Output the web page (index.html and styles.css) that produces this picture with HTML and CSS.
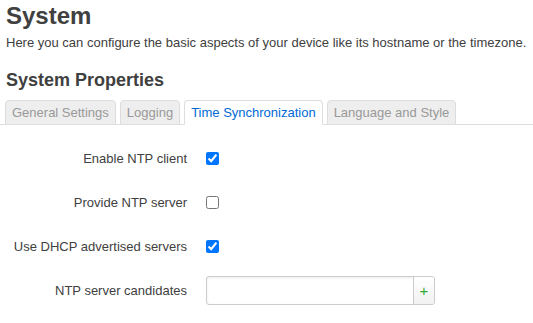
FILE: index.html
```html
<!DOCTYPE html>
<html lang="en">
<head>
    <meta charset="UTF-8">
    <meta name="viewport" content="width=device-width, initial-scale=1.0">
    <title>System</title>
    <link rel="stylesheet" href="styles.css">
</head>
<body>
    <div class="main">
        <h2 class="page-title">System</h2>
        <div class="page-desc">Here you can configure the basic aspects of your device like its hostname or the timezone.</div>

        <h3 class="section-title">System Properties</h3>

        <ul class="tabmenu">
            <li class="tab"><a href="#">General Settings</a></li>
            <li class="tab"><a href="#">Logging</a></li>
            <li class="tab active"><a href="#">Time Synchronization</a></li>
            <li class="tab"><a href="#">Language and Style</a></li>
        </ul>

        <div class="section">
            <div class="row">
                <label class="row-label" for="ntp-client">Enable NTP client</label>
                <div class="row-field"><input type="checkbox" id="ntp-client" checked></div>
            </div>
            <div class="row">
                <label class="row-label" for="ntp-server">Provide NTP server</label>
                <div class="row-field"><input type="checkbox" id="ntp-server"></div>
            </div>
            <div class="row">
                <label class="row-label" for="ntp-dhcp">Use DHCP advertised servers</label>
                <div class="row-field"><input type="checkbox" id="ntp-dhcp" checked></div>
            </div>
            <div class="row">
                <label class="row-label" for="ntp-list">NTP server candidates</label>
                <div class="row-field">
                    <div class="dynlist">
                        <input type="text" id="ntp-list" class="dynlist-input">
                        <button class="dynlist-add">+</button>
                    </div>
                </div>
            </div>
        </div>
    </div>
</body>
</html>
```

FILE: styles.css
```css
body {
    margin: 0;
    padding: 0;
    font-family: "Liberation Sans", Arial, sans-serif;
    font-size: 13px;
    color: #404040;
    background: #fff;
}

.main {
    padding: 2px 0 0 6px;
}

.page-title {
    margin: 0;
    font-size: 24px;
    line-height: 28px;
    font-weight: bold;
}

.page-desc {
    margin-top: 4px;
    line-height: 18px;
}

.section-title {
    margin: 16px 0 0;
    font-size: 18px;
    line-height: 24px;
    font-weight: bold;
}

.tabmenu {
    list-style: none;
    margin: 8px 0 0 -6px;
    padding: 0 0 0 5px;
    display: flex;
    gap: 4px;
    border-bottom: 1px solid #ddd;
}

.tab {
    margin-bottom: -1px;
}

.tab a {
    display: block;
    padding: 0 6px;
    line-height: 23px;
    color: #999;
    text-decoration: none;
    background: #eee;
    border: 1px solid #ddd;
    border-bottom-color: #ddd;
    border-radius: 4px 4px 0 0;
}

.tab.active a {
    color: #0069d6;
    background: #fff;
    border-bottom-color: #fff;
}

.section {
    padding-top: 11px;
}

.row {
    display: flex;
    align-items: center;
    height: 44px;
}

.row-label {
    width: 181px;
    text-align: right;
    flex-shrink: 0;
}

.row-field {
    margin-left: 19px;
    display: flex;
    align-items: center;
}

.row-field input[type="checkbox"] {
    margin: 0;
    width: 13px;
    height: 13px;
}

.dynlist {
    display: flex;
    width: 229px;
    height: 29px;
    box-sizing: border-box;
    border: 1px solid #ccc;
    border-radius: 3px;
    box-shadow: inset 0 1px 3px rgba(0,0,0,0.08);
    overflow: hidden;
}

.dynlist-input {
    flex: 1;
    min-width: 0;
    border: none;
    background: transparent;
    padding: 0 6px;
    outline: none;
    font: inherit;
}

.dynlist-add {
    width: 21px;
    border: none;
    border-left: 1px solid #ccc;
    background: linear-gradient(#fff, #f2f2f2);
    color: #3a3;
    font-family: "Liberation Sans", Arial, sans-serif;
    font-size: 15px;
    font-weight: normal;
    padding: 0;
    cursor: pointer;
}
```
